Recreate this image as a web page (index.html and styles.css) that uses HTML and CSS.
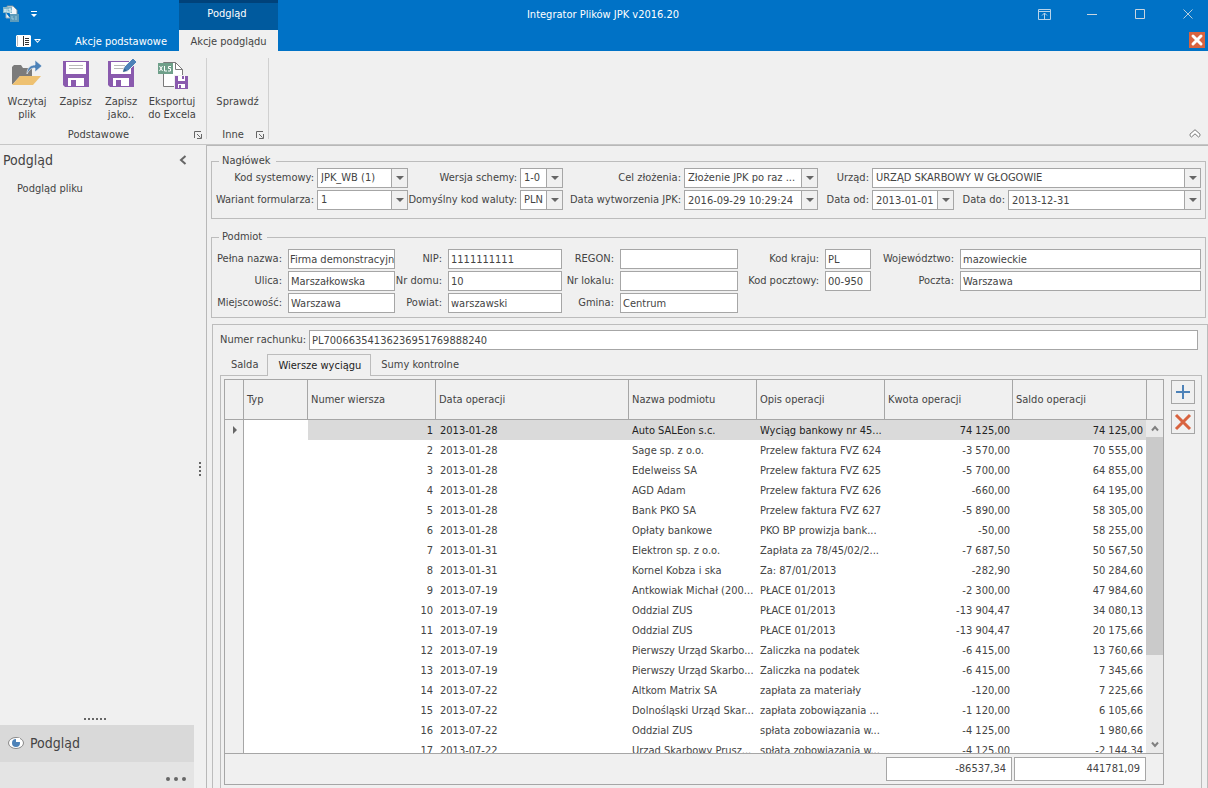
FILE: index.html
```html
<!DOCTYPE html>
<html lang="pl">
<head>
<meta charset="utf-8">
<title>Integrator Plików JPK v2016.20</title>
<link rel="stylesheet" href="styles.css">
</head>
<body>
<header class="titlebar">
  <div class="quick-access">
    <svg width="16" height="17" viewBox="0 0 16 17" aria-hidden="true"><path d="M4 2V0h6l4 4v8H9" fill="#f3f7fa" stroke="#78909c"/><path d="M3 7v5h4" fill="#eef4f8" stroke="#90a9b8"/><rect y="1" width="9" height="6" fill="#80b5c9"/><path d="M1 3l2 3M3 3L1 6M4 3v3h2M8 3H6v1h2v2H6" stroke="#d6edf3" fill="none"/><rect x="7" y="8" width="9" height="8" fill="#5c9bbb"/><path d="M9 10v3h2M13 10v4" stroke="#9bc8da" fill="none"/></svg>
    <button class="plain" aria-label="Dostosuj pasek"><svg width="6" height="6" viewBox="0 0 6 6"><path d="M0 0h6v1H0zM0 3h6L3 6z" fill="#fff"/></svg></button>
  </div>
  <div class="context-title">Podgląd</div>
  <h1 class="app-title">Integrator Plików JPK v2016.20</h1>
  <div class="window-buttons">
    <button class="plain" aria-label="Opcje wstążki"><svg width="13" height="12" viewBox="0 0 13 12"><path d="M.5.5h12v10H.5zM1 2.5h11M6.500 10V4M4 6.500L6.500 4 9 6.500" fill="none" stroke="#b7d3ea"/></svg></button>
    <button class="plain" aria-label="Minimalizuj"><svg width="11" height="11" viewBox="0 0 11 11"><path d="M0 5.500h10" stroke="#c9d5df"/></svg></button>
    <button class="plain" aria-label="Maksymalizuj"><svg width="11" height="11" viewBox="0 0 11 11"><path d="M.5.5h9v9h-9z" fill="none" stroke="#c9d5df"/></svg></button>
    <button class="plain" aria-label="Zamknij"><svg width="11" height="11" viewBox="0 0 11 11"><path d="M.5.5l9 9M9.500.5l-9 9" stroke="#b7cede"/></svg></button>
  </div>
  <nav class="tabs-main">
    <button class="plain" aria-label="Menu aplikacji"><svg width="25" height="12" viewBox="0 0 25 12"><path d="M1 0h13l1 1v10l-1 1H1l-1-1V1z" fill="#fff"/><path d="M7.500 1v10" stroke="#333" /><path d="M1.500 1v10" stroke="#bdbdbd"/><path d="M9 3.500h4M9 5.500h4M9 7.500h4M9 9.500h4" stroke="#333"/><path d="M18 4h7l-3.500 4z" fill="#fff"/><path d="M20 5h3l-1.500 1.500z" fill="#0072c6"/></svg></button>
    <button class="plain ribbon-tab">Akcje podstawowe</button>
  </nav>
  <button class="plain ribbon-tab ribbon-tab-active">Akcje podglądu</button>
  <div class="close-document">
    <button class="plain" aria-label="Zamknij dokument"><svg width="16" height="16" viewBox="0 0 16 16"><path d="M0 0h16v16H0z" fill="#d9633f"/><path d="M4 4l8 8M12 4l-8 8" stroke="#fff" stroke-width="3" stroke-linecap="round"/></svg></button>
  </div>
</header>

<section class="ribbon">
  <div class="ribbon-group">
    <div class="ribbon-items items-basic">
      <button class="plain tool"><svg width="32" height="32" viewBox="0 0 32 32"><path d="M1 7l2-2h7l2 3h9v8H9l-7 8H1z" fill="#7b7b7b"/><path d="M9 16h21l-8 9H1z" fill="#eec171"/><path d="M16 14c0-7 4-9 8-9V0l7 6-7 6V8c-4 0-6 2-8 6z" fill="#4d82b8" stroke="#f0f0f0" stroke-width=".7"/></svg><span>Wczytaj<br>plik</span></button>
      <button class="plain tool"><svg width="32" height="32" viewBox="0 0 32 32"><path d="M3 1h26v26H5l-2-2z" fill="#8a5aae"/><path d="M6 2h20v12H6zM8 18h16v8H8z" fill="#fff"/><path d="M9 5.500h14M9 8.500h14" stroke="#b8b8b8"/><path d="M11 20h5v6h-5z" fill="#8a5aae"/></svg><span>Zapisz</span></button>
      <button class="plain tool"><svg width="32" height="32" viewBox="0 0 32 32"><path d="M3 1h26v26H5l-2-2z" fill="#8a5aae"/><path d="M6 2h20v12H6zM8 18h16v8H8z" fill="#fff"/><path d="M9 5.500h14M9 8.500h11" stroke="#b8b8b8"/><path d="M11 20h5v6h-5z" fill="#8a5aae"/><path d="M18 12l1-5 9-9 4 4-9 9z" fill="#4d82b8" stroke="#f0f0f0"/><path d="M18 12l1-4 3 3z" fill="#31618f"/></svg><span>Zapisz<br>jako..</span></button>
      <button class="plain tool"><svg width="32" height="32" viewBox="0 0 32 32"><path d="M7.500 2.500h12l7 7v17h-19z" fill="#fff" stroke="#7a7a7a"/><path d="M19.500 2.500v7h7" fill="none" stroke="#7a7a7a"/><path d="M2 3h15v11H2z" fill="#6fa08a"/><path d="M3.500 6l3 5M6.500 6l-3 5M8.500 6v5H11M15 6.500h-2.500v2h2V11H12" fill="none" stroke="#fff"/><path d="M18 15h14v14H18z" fill="#f0f0f0"/><path d="M19 16h13v13H19z" fill="#8a5aae"/><path d="M22 16h7v5h-7zM22 24h7v4h-7z" fill="#fff"/><path d="M26 16h2v3h-2zM23 25h2v3h-2z" fill="#8a5aae"/></svg><span>Eksportuj<br>do Excela</span></button>
    </div>
    <div class="ribbon-caption"><span>Podstawowe</span><button class="plain" aria-label="Więcej: Podstawowe"><svg width="8" height="8" viewBox="0 0 8 8"><path d="M.5 7V.5H7M3 3l3.500 3.500M7.500 3v4.500H3" fill="none" stroke="#666"/></svg></button></div>
  </div>
  <div class="ribbon-group">
    <div class="ribbon-items items-other">
      <button class="plain tool"><svg width="32" height="32" aria-hidden="true"></svg><span>Sprawdź</span></button>
    </div>
    <div class="ribbon-caption"><span>Inne</span><button class="plain" aria-label="Więcej: Inne"><svg width="8" height="8" viewBox="0 0 8 8"><path d="M.5 7V.5H7M3 3l3.500 3.500M7.500 3v4.500H3" fill="none" stroke="#666"/></svg></button></div>
  </div>
  <button class="plain collapse" aria-label="Zwiń wstążkę"><svg width="12" height="9" viewBox="0 0 12 9"><path d="M6 .7l5 4.500v1.500L9.500 8 6 4.800 2.500 8 1 6.700V5.200z" fill="#fff" stroke="#777"/></svg></button>
</section>

<div class="workspace">
  <aside class="sidebar">
    <div class="side-head"><h2>Podgląd</h2><button class="plain" aria-label="Zwiń panel"><svg width="8" height="10" viewBox="0 0 8 10"><path d="M6.500 1L2 5l4.500 4" fill="none" stroke="#666" stroke-width="2"/></svg></button></div>
    <a class="side-link" href="#plik">Podgląd pliku</a>
    <div class="side-grip"><svg width="22" height="2" viewBox="0 0 22 2"><path d="M0 1h22" stroke="#666" stroke-width="2" stroke-dasharray="2"/></svg></div>
    <button class="plain side-item"><svg width="18" height="14" viewBox="0 0 18 14"><ellipse cx="9" cy="7" rx="7.500" ry="5.500" fill="#fff" stroke="#888"/><circle cx="9" cy="7" r="4" fill="#4d82b8"/><path d="M9 2h4v4H9z" fill="#fff"/></svg>Podgląd</button>
    <button class="plain side-more" aria-label="Więcej"><svg width="20" height="4" viewBox="0 0 20 4"><g fill="#666"><circle cx="2" cy="2" r="2"/><circle cx="10" cy="2" r="2"/><circle cx="18" cy="2" r="2"/></g></svg></button>
  </aside>
  <div class="splitter"><svg width="2" height="14" viewBox="0 0 2 14"><path d="M1 0v14" stroke="#666" stroke-width="2" stroke-dasharray="2"/></svg></div>

  <main class="document">
    <fieldset>
      <legend>Nagłówek</legend>
      <div class="form-header">
        <label for="kod">Kod systemowy:</label>
        <div class="combo"><select id="kod"><option>JPK_WB (1)</option></select><span class="arrow"></span></div>
        <label for="wersja">Wersja schemy:</label>
        <div class="combo"><select id="wersja"><option>1-0</option></select><span class="arrow"></span></div>
        <label for="cel">Cel złożenia:</label>
        <div class="combo"><select id="cel"><option>Złożenie JPK po raz ...</option></select><span class="arrow"></span></div>
        <label for="urzad">Urząd:</label>
        <div class="combo span-rest"><select id="urzad"><option>URZĄD SKARBOWY W GŁOGOWIE</option></select><span class="arrow"></span></div>
        <label for="wariant">Wariant formularza:</label>
        <div class="combo"><select id="wariant"><option>1</option></select><span class="arrow"></span></div>
        <label for="waluta">Domyślny kod waluty:</label>
        <div class="combo"><select id="waluta"><option>PLN</option></select><span class="arrow"></span></div>
        <label for="wytw">Data wytworzenia JPK:</label>
        <div class="combo"><input id="wytw" value="2016-09-29 10:29:24"><span class="arrow"></span></div>
        <label for="od">Data od:</label>
        <div class="combo"><input id="od" value="2013-01-01"><span class="arrow"></span></div>
        <label for="do">Data do:</label>
        <div class="combo"><input id="do" value="2013-12-31"><span class="arrow"></span></div>
      </div>
    </fieldset>

    <fieldset class="entity">
      <legend>Podmiot</legend>
      <div class="form-entity">
        <label for="nazwa">Pełna nazwa:</label><input class="box box-tight" id="nazwa" value="Firma demonstracyjn">
        <label for="nip">NIP:</label><input class="box" id="nip" value="1111111111">
        <label for="regon">REGON:</label><input class="box" id="regon">
        <label for="kraj">Kod kraju:</label><input class="box" id="kraj" value="PL">
        <label for="woj">Województwo:</label><input class="box" id="woj" value="mazowieckie">
        <label for="ulica">Ulica:</label><input class="box" id="ulica" value="Marszałkowska">
        <label for="dom">Nr domu:</label><input class="box" id="dom" value="10">
        <label for="lokal">Nr lokalu:</label><input class="box" id="lokal">
        <label for="poczt">Kod pocztowy:</label><input class="box" id="poczt" value="00-950">
        <label for="poczta">Poczta:</label><input class="box" id="poczta" value="Warszawa">
        <label for="miejsc">Miejscowość:</label><input class="box" id="miejsc" value="Warszawa">
        <label for="powiat">Powiat:</label><input class="box" id="powiat" value="warszawski">
        <label for="gmina">Gmina:</label><input class="box" id="gmina" value="Centrum">
      </div>
    </fieldset>

    <section class="statement">
      <div class="account"><label for="rachunek">Numer rachunku:</label><input class="box" id="rachunek" value="PL70066354136236951769888240"></div>
      <div class="tabs"><button class="plain tab">Salda</button><button class="plain tab tab-active">Wiersze wyciągu</button><button class="plain tab">Sumy kontrolne</button></div>
      <div class="tab-panel">
        <div class="datagrid">
          <div class="grid-view">
            <div class="table-wrap">
              <table>
                <colgroup><col class="c-mark"><col class="c-type"><col class="c-std"><col><col class="c-std"><col class="c-std"><col class="c-std"><col class="c-last"></colgroup>
                <thead><tr><th></th><th>Typ</th><th>Numer wiersza</th><th>Data operacji</th><th>Nazwa podmiotu</th><th>Opis operacji</th><th>Kwota operacji</th><th>Saldo operacji</th></tr></thead>
                <tbody>
                  <tr class="selected"><td><svg width="4" height="8" viewBox="0 0 4 8"><path d="M0 0l4 4-4 4z" fill="#666"/></svg></td><td></td><td>1</td><td>2013-01-28</td><td>Auto SALEon s.c.</td><td>Wyciąg bankowy nr 45...</td><td>74 125,00</td><td>74 125,00</td></tr>
                  <tr><td></td><td></td><td>2</td><td>2013-01-28</td><td>Sage sp. z o.o.</td><td>Przelew faktura FVZ 624</td><td>-3 570,00</td><td>70 555,00</td></tr>
                  <tr><td></td><td></td><td>3</td><td>2013-01-28</td><td>Edelweiss SA</td><td>Przelew faktura FVZ 625</td><td>-5 700,00</td><td>64 855,00</td></tr>
                  <tr><td></td><td></td><td>4</td><td>2013-01-28</td><td>AGD Adam</td><td>Przelew faktura FVZ 626</td><td>-660,00</td><td>64 195,00</td></tr>
                  <tr><td></td><td></td><td>5</td><td>2013-01-28</td><td>Bank PKO SA</td><td>Przelew faktura FVZ 627</td><td>-5 890,00</td><td>58 305,00</td></tr>
                  <tr><td></td><td></td><td>6</td><td>2013-01-28</td><td>Opłaty bankowe</td><td>PKO BP prowizja bank...</td><td>-50,00</td><td>58 255,00</td></tr>
                  <tr><td></td><td></td><td>7</td><td>2013-01-31</td><td>Elektron sp. z o.o.</td><td>Zapłata za 78/45/02/2...</td><td>-7 687,50</td><td>50 567,50</td></tr>
                  <tr><td></td><td></td><td>8</td><td>2013-01-31</td><td>Kornel Kobza i ska</td><td>Za: 87/01/2013</td><td>-282,90</td><td>50 284,60</td></tr>
                  <tr><td></td><td></td><td>9</td><td>2013-07-19</td><td>Antkowiak Michał (200...</td><td>PŁACE 01/2013</td><td>-2 300,00</td><td>47 984,60</td></tr>
                  <tr><td></td><td></td><td>10</td><td>2013-07-19</td><td>Oddzial ZUS</td><td>PŁACE 01/2013</td><td>-13 904,47</td><td>34 080,13</td></tr>
                  <tr><td></td><td></td><td>11</td><td>2013-07-19</td><td>Oddzial ZUS</td><td>PŁACE 01/2013</td><td>-13 904,47</td><td>20 175,66</td></tr>
                  <tr><td></td><td></td><td>12</td><td>2013-07-19</td><td>Pierwszy Urząd Skarbo...</td><td>Zaliczka na podatek</td><td>-6 415,00</td><td>13 760,66</td></tr>
                  <tr><td></td><td></td><td>13</td><td>2013-07-19</td><td>Pierwszy Urząd Skarbo...</td><td>Zaliczka na podatek</td><td>-6 415,00</td><td>7 345,66</td></tr>
                  <tr><td></td><td></td><td>14</td><td>2013-07-22</td><td>Altkom Matrix SA</td><td>zapłata za materiały</td><td>-120,00</td><td>7 225,66</td></tr>
                  <tr><td></td><td></td><td>15</td><td>2013-07-22</td><td>Dolnośląski Urząd Skar...</td><td>zapłata zobowiązania ...</td><td>-1 120,00</td><td>6 105,66</td></tr>
                  <tr><td></td><td></td><td>16</td><td>2013-07-22</td><td>Oddzial ZUS</td><td>spłata zobowiazania w...</td><td>-4 125,00</td><td>1 980,66</td></tr>
                  <tr><td></td><td></td><td>17</td><td>2013-07-22</td><td>Urzad Skarbowy Prusz...</td><td>spłata zobowiazania w...</td><td>-4 125,00</td><td>-2 144,34</td></tr>
                </tbody>
              </table>
            </div>
            <div class="gutter">
              <div class="gutter-head"></div>
              <div class="scrollbar">
                <button class="plain" aria-label="W górę"><svg width="8" height="7" viewBox="0 0 8 7"><path d="M1 5.500l3-3.500 3 3.500" fill="none" stroke="#808080" stroke-width="2"/></svg></button>
                <div class="track"><div class="thumb"></div></div>
                <button class="plain" aria-label="W dół"><svg width="8" height="7" viewBox="0 0 8 7"><path d="M1 1.500L4 5l3-3.500" fill="none" stroke="#808080" stroke-width="2"/></svg></button>
              </div>
            </div>
          </div>
          <div class="totals"><output class="total-amount">-86537,34</output><output class="total-balance">441781,09</output></div>
        </div>
        <div class="row-actions">
          <button class="plain action" aria-label="Dodaj"><svg width="14" height="14" viewBox="0 0 14 14"><path d="M7 0v14M0 7h14" stroke="#4d82b8" stroke-width="2"/></svg></button>
          <button class="plain action" aria-label="Usuń"><svg width="16" height="16" viewBox="0 0 16 16"><path d="M1 1l14 14M15 1L1 15" stroke="#d9633f" stroke-width="3"/></svg></button>
        </div>
      </div>
    </section>
  </main>
</div>
</body>
</html>
```

FILE: styles.css
```css
* { box-sizing: border-box; }

body {
  margin: 0;
  height: 100vh;
  display: flex;
  flex-direction: column;
  overflow: hidden;
  background: #f0f0f0;
  color: #444;
  font: 11px/14px "DejaVu Sans Condensed", "Noto Sans", sans-serif;
}

h1, h2 { margin: 0; font-weight: normal; }
svg { display: block; flex: none; overflow: visible; }
input, select, button { font: inherit; color: inherit; }
.plain { margin: 0; padding: 0; border: 0; background: none; }

/* Title bar and ribbon tabs */
.titlebar {
  flex: none;
  display: grid;
  grid-template-columns: 179px 99px 1fr;
  grid-template-rows: 30px 21px;
  background: #0072c6;
  color: #fff;
}
.quick-access { grid-row: 1; grid-column: 1; display: flex; align-items: center; gap: 12px; padding: 0 0 2px 3px; }
.context-title {
  grid-row: 1;
  grid-column: 2;
  display: flex;
  align-items: center;
  justify-content: center;
  background: #005a9e;
  border-top: 3px solid #00427a;
  padding: 0 3px 6px 0;
}
.app-title {
  grid-row: 1;
  grid-column: 1 / -1;
  justify-self: center;
  align-self: center;
  padding-right: 2px;
  font-size: 11px;
}
.window-buttons {
  grid-row: 1;
  grid-column: 3;
  justify-self: end;
  display: flex;
  gap: 20px;
  padding: 0 6px 1px 0;
}
.window-buttons button { width: 28px; display: flex; align-items: center; justify-content: center; }
.tabs-main { grid-row: 2; grid-column: 1; display: flex; align-items: center; justify-content: space-between; padding: 0 12px 0 16px; }
.ribbon-tab { white-space: nowrap; padding-top: 2px; }
.ribbon-tab-active { grid-row: 2; grid-column: 2; background: #f0f0f0; color: #444; }
.close-document { grid-row: 2; grid-column: 3; display: flex; justify-content: flex-end; align-items: center; padding: 0 3px 1px 0; }

/* Ribbon */
.ribbon {
  flex: none;
  display: flex;
  height: 94px;
  padding-top: 7px;
  border-bottom: 1px solid #c6c6c6;
}
.ribbon-group { display: flex; flex-direction: column; justify-content: space-between; height: 81px; border-right: 1px solid #d0d0d0; }
.ribbon-items { display: grid; padding-top: 2px; }
.items-basic { grid-template-columns: 54px 43px 48px 54px; padding-right: 7px; }
.items-other { grid-template-columns: 61px; }
.tool { display: flex; flex-direction: column; align-items: center; gap: 3px; line-height: 13px; }
.tool span { white-space: nowrap; }
.ribbon-caption { display: grid; grid-template-columns: 1fr auto; align-items: center; padding: 0 4px 0 3px; text-align: center; line-height: 8px; }
.collapse { margin-left: auto; align-self: flex-end; padding: 0 7px 6px 0; }

/* Sidebar */
.workspace { flex: 1; min-height: 0; display: grid; grid-template-columns: 194px 12px 1fr; }
.sidebar { display: flex; flex-direction: column; min-height: 0; }
.side-head { display: flex; justify-content: space-between; align-items: center; padding: 5px 7px 5px 3px; line-height: 20px; }
.side-head h2 { font-size: 14px; }
.side-link { color: inherit; text-decoration: none; padding: 7px 17px; }
.side-grip { margin-top: auto; display: flex; justify-content: center; padding: 0 4px 5px 0; }
.side-item { display: flex; align-items: center; gap: 5px; height: 37px; padding: 0 0 2px 7px; background: #d9d9d9; font-size: 14px; }
.side-more { display: flex; justify-content: flex-end; align-items: center; height: 26px; padding: 8px 8px 0 0; background: #e4e4e4; }
.splitter { display: flex; align-items: center; justify-content: center; padding-top: 4px; }

/* Document */
.document {
  display: flex;
  flex-direction: column;
  min-width: 0;
  min-height: 0;
  border: 1px solid #b8b8b8;
  border-width: 1px 0 0 1px;
  padding: 8px 2px 0 4px;
}
fieldset { flex: none; min-width: 0; margin: 0 0 11px; padding: 0 4px 8px 1px; border: 1px solid #bcbcbc; }
.entity { margin-bottom: 6px; padding-bottom: 4px; }
legend { margin-left: 6px; padding: 0 5px 0 3px; }
.form-header, .form-entity { display: grid; grid-auto-rows: 20px; row-gap: 2px; align-items: center; }
.form-header { grid-template-columns: 104px 91px 112px 43px 121px 134px 54px 82px 54px 1fr; }
.form-entity { grid-template-columns: 75px 107px 53px 114px 58px 118px 87px 46px 89px 1fr; padding-top: 5px; }
.document label { text-align: right; white-space: nowrap; }
.form-header label { padding-right: 3px; }
.form-entity label { padding-right: 6px; }
.span-rest { grid-column: span 3; }

.box, .combo { height: 20px; min-width: 0; border: 1px solid #a6a6a6; border-radius: 0; background: #fff; }
.box { width: 100%; padding: 0 2px; }
.box-tight { padding: 0 0 0 1px; }
.combo { display: grid; grid-template-columns: 1fr 16px; }
.combo select, .combo input {
  grid-row: 1;
  grid-column: 1 / -1;
  width: 100%;
  min-width: 0;
  height: 18px;
  margin: 0;
  padding: 0 16px 0 3px;
  border: 0;
  border-radius: 0;
  background: none;
  appearance: none;
}
.arrow {
  grid-row: 1;
  grid-column: 2;
  display: flex;
  align-items: center;
  justify-content: center;
  background: #f0f0f0;
  border-left: 1px solid #a6a6a6;
  pointer-events: none;
}
.arrow::after { content: ""; border: 4px solid transparent; border-top-color: #666; border-bottom: 0; }

/* Statement */
.statement {
  flex: 1;
  min-height: 0;
  display: flex;
  flex-direction: column;
  margin: 0 -2px 0 1px;
  padding: 5px 5px 0 7px;
  border: 1px solid #bcbcbc;
  border-bottom: 0;
}
.account { display: flex; align-items: center; gap: 3px; padding-right: 4px; }
.tabs { display: flex; padding: 4px 0 0 1px; }
.tab { height: 21px; padding: 0 9px 0 10px; white-space: nowrap; }
.tab-active { height: 22px; margin-bottom: -1px; border: 1px solid #bcbcbc; border-bottom: 0; background: #f0f0f0; color: #222; z-index: 1; }
.tab-panel { flex: 1; min-height: 0; display: flex; gap: 7px; padding: 3px 6px 3px 3px; border: 1px solid #bcbcbc; border-bottom: 0; }
.datagrid { flex: 1; min-width: 0; display: flex; flex-direction: column; border: 1px solid #a6a6a6; }
.grid-view { flex: 1; min-height: 0; display: flex; background: #fff; }
.table-wrap { flex: 1; min-width: 0; overflow: hidden; }
table { width: 100%; table-layout: fixed; border-collapse: separate; border-spacing: 0; }
.c-mark { width: 19px; }
.c-type { width: 64px; }
.c-std { width: 128px; }
.c-last { width: 133px; }
th { height: 40px; padding: 0 3px; text-align: left; font-weight: normal; background: #f0f0f0; border: 1px solid #a6a6a6; border-width: 0 1px 1px 0; }
th:last-child { border-right: 0; }
td { height: 20px; padding: 2px 0 0 3px; white-space: nowrap; overflow: hidden; }
td:first-child { background: #f0f0f0; border-right: 1px solid #a6a6a6; padding: 0 0 0 8px; }
td:nth-child(4) { padding-left: 4px; }
td:nth-child(3), td:nth-child(7), td:nth-child(8) { text-align: right; padding: 2px 3px 0 0; }
.selected { color: #222; }
.selected td:nth-child(n+3) { background: #dadada; }

.gutter { width: 17px; display: flex; flex-direction: column; }
.gutter-head { height: 40px; background: #f0f0f0; border: 1px solid #a6a6a6; border-width: 0 0 1px 1px; }
.scrollbar { flex: 1; min-height: 0; display: flex; flex-direction: column; background: #eaeaea; }
.scrollbar button { height: 17px; display: flex; align-items: center; justify-content: center; }
.track { flex: 1; }
.thumb { height: 73%; background: #cacaca; }
.totals { display: flex; justify-content: flex-end; gap: 2px; padding: 3px 17px 3px 0; border-top: 1px solid #a6a6a6; }
.totals output { height: 24px; padding: 4px 5px; text-align: right; background: #fff; border: 1px solid #a6a6a6; }
.total-amount { width: 126px; }
.total-balance { width: 132px; }
.row-actions { display: flex; flex-direction: column; gap: 6px; padding-top: 1px; }
.action { width: 24px; height: 24px; display: flex; align-items: center; justify-content: center; border: 1px solid #a6a6a6; }
```
